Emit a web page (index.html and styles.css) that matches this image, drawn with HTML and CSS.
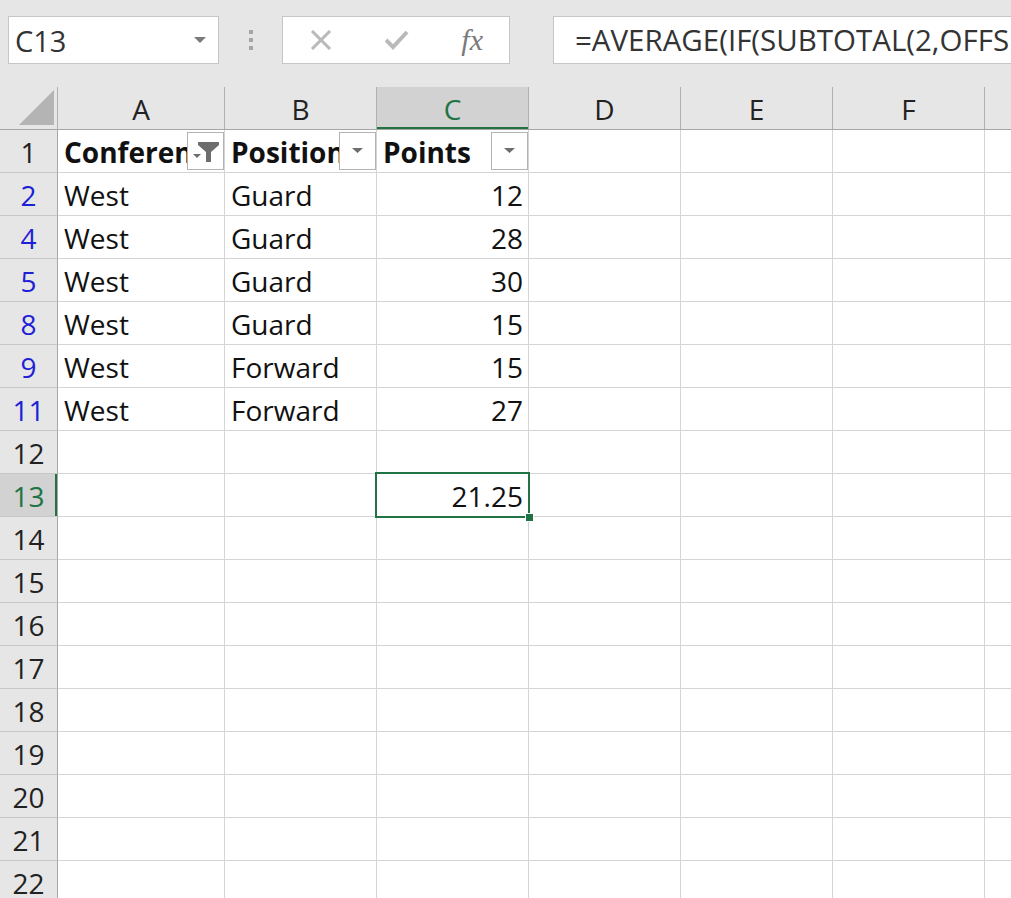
FILE: index.html
```html
<!DOCTYPE html>
<html lang="en">
<head>
  <meta charset="UTF-8" />
  <title>Book1 - Excel</title>
  <link rel="stylesheet" href="styles.css">
</head>
<body>
  <div class="toolbar">
    <div class="namebox">
      <span>C13</span>
      <svg class="caret" width="12" height="7" viewBox="0 0 12 7"><polygon points="0,0 12,0 6,6" fill="#7a7a7a"/></svg>
    </div>
    <div class="grip"><i></i><i></i><i></i></div>
    <div class="fxbox">
      <svg width="22" height="20" viewBox="0 0 22 20"><path d="M2 1 L20 19 M20 1 L2 19" stroke="#b9b9b9" stroke-width="3" fill="none"/></svg>
      <svg width="24" height="20" viewBox="0 0 24 20"><path d="M1 10 L8 17 L22 2" stroke="#b9b9b9" stroke-width="4" fill="none"/></svg>
      <span class="fx">fx</span>
    </div>
    <div class="formula">=AVERAGE(IF(SUBTOTAL(2,OFFSET(C2:C11,ROW(C2:C11)-ROW(C2),0)),C2:C11))</div>
  </div>

  <div class="sheet">
    <div class="row head">
      <div class="corner"><svg width="35" height="35" viewBox="0 0 35 35"><polygon points="35,0 35,35 0,35" fill="#b4b4b4"/></svg></div>
      <div class="colhead">A</div>
      <div class="colhead">B</div>
      <div class="colhead sel">C</div>
      <div class="colhead">D</div>
      <div class="colhead">E</div>
      <div class="colhead">F</div>
      <div class="colhead">G</div>
    </div>

    <div class="row">
      <div class="rowhead">1</div>
      <div class="cell title">Conference
        <span class="filter"><svg width="36" height="36" viewBox="0 0 36 36"><polygon points="5,21 13,21 9,25" fill="#6d6d6d"/><polygon points="10,9 31,9 31,12 23,19 23,29 18,29 18,19 10,12" fill="#6d6d6d"/></svg></span>
      </div>
      <div class="cell title">Position
        <span class="filter"><svg width="36" height="36" viewBox="0 0 36 36"><polygon points="12,15 23,15 17.5,20" fill="#6d6d6d"/></svg></span>
      </div>
      <div class="cell title">Points
        <span class="filter"><svg width="36" height="36" viewBox="0 0 36 36"><polygon points="12,15 23,15 17.5,20" fill="#6d6d6d"/></svg></span>
      </div>
      <div class="cell"></div><div class="cell"></div><div class="cell"></div><div class="cell"></div>
    </div>

    <div class="row">
      <div class="rowhead shown">2</div>
      <div class="cell">West</div><div class="cell">Guard</div><div class="cell num">12</div>
      <div class="cell"></div><div class="cell"></div><div class="cell"></div><div class="cell"></div>
    </div>
    <div class="row">
      <div class="rowhead shown">4</div>
      <div class="cell">West</div><div class="cell">Guard</div><div class="cell num">28</div>
      <div class="cell"></div><div class="cell"></div><div class="cell"></div><div class="cell"></div>
    </div>
    <div class="row">
      <div class="rowhead shown">5</div>
      <div class="cell">West</div><div class="cell">Guard</div><div class="cell num">30</div>
      <div class="cell"></div><div class="cell"></div><div class="cell"></div><div class="cell"></div>
    </div>
    <div class="row">
      <div class="rowhead shown">8</div>
      <div class="cell">West</div><div class="cell">Guard</div><div class="cell num">15</div>
      <div class="cell"></div><div class="cell"></div><div class="cell"></div><div class="cell"></div>
    </div>
    <div class="row">
      <div class="rowhead shown">9</div>
      <div class="cell">West</div><div class="cell">Forward</div><div class="cell num">15</div>
      <div class="cell"></div><div class="cell"></div><div class="cell"></div><div class="cell"></div>
    </div>
    <div class="row">
      <div class="rowhead shown">11</div>
      <div class="cell">West</div><div class="cell">Forward</div><div class="cell num">27</div>
      <div class="cell"></div><div class="cell"></div><div class="cell"></div><div class="cell"></div>
    </div>
    <div class="row">
      <div class="rowhead">12</div>
      <div class="cell"></div><div class="cell"></div><div class="cell"></div>
      <div class="cell"></div><div class="cell"></div><div class="cell"></div><div class="cell"></div>
    </div>
    <div class="row">
      <div class="rowhead sel">13</div>
      <div class="cell"></div><div class="cell"></div><div class="cell num active">21.25</div>
      <div class="cell"></div><div class="cell"></div><div class="cell"></div><div class="cell"></div>
    </div>
    <div class="row">
      <div class="rowhead">14</div>
      <div class="cell"></div><div class="cell"></div><div class="cell"></div>
      <div class="cell"></div><div class="cell"></div><div class="cell"></div><div class="cell"></div>
    </div>
    <div class="row">
      <div class="rowhead">15</div>
      <div class="cell"></div><div class="cell"></div><div class="cell"></div>
      <div class="cell"></div><div class="cell"></div><div class="cell"></div><div class="cell"></div>
    </div>
    <div class="row">
      <div class="rowhead">16</div>
      <div class="cell"></div><div class="cell"></div><div class="cell"></div>
      <div class="cell"></div><div class="cell"></div><div class="cell"></div><div class="cell"></div>
    </div>
    <div class="row">
      <div class="rowhead">17</div>
      <div class="cell"></div><div class="cell"></div><div class="cell"></div>
      <div class="cell"></div><div class="cell"></div><div class="cell"></div><div class="cell"></div>
    </div>
    <div class="row">
      <div class="rowhead">18</div>
      <div class="cell"></div><div class="cell"></div><div class="cell"></div>
      <div class="cell"></div><div class="cell"></div><div class="cell"></div><div class="cell"></div>
    </div>
    <div class="row">
      <div class="rowhead">19</div>
      <div class="cell"></div><div class="cell"></div><div class="cell"></div>
      <div class="cell"></div><div class="cell"></div><div class="cell"></div><div class="cell"></div>
    </div>
    <div class="row">
      <div class="rowhead">20</div>
      <div class="cell"></div><div class="cell"></div><div class="cell"></div>
      <div class="cell"></div><div class="cell"></div><div class="cell"></div><div class="cell"></div>
    </div>
    <div class="row">
      <div class="rowhead">21</div>
      <div class="cell"></div><div class="cell"></div><div class="cell"></div>
      <div class="cell"></div><div class="cell"></div><div class="cell"></div><div class="cell"></div>
    </div>
    <div class="row">
      <div class="rowhead">22</div>
      <div class="cell"></div><div class="cell"></div><div class="cell"></div>
      <div class="cell"></div><div class="cell"></div><div class="cell"></div><div class="cell"></div>
    </div>
  </div>
</body>
</html>
```

FILE: styles.css
```css
body {
  margin: 0;
  width: 1011px;
  height: 898px;
  overflow: hidden;
  background: #fff;
  font-family: "Open Sans", sans-serif;
  font-size: 28px;
  color: #111;
}

/* name box + formula bar */
.toolbar {
  box-sizing: border-box;
  height: 87px;
  padding: 16px 0 0 8px;
  background: #e6e6e6;
  display: flex;
  align-items: flex-start;
  overflow: hidden;
}
.namebox {
  box-sizing: border-box;
  width: 211px;
  height: 48px;
  flex: none;
  background: #fff;
  border: 1px solid #c6c6c6;
  display: flex;
  align-items: center;
  justify-content: space-between;
  padding: 0 12px 0 6px;
  font-size: 29px;
  color: #333;
}
.grip {
  margin-left: 30px;
  padding-top: 14px;
  flex: none;
  display: flex;
  flex-direction: column;
  gap: 4px;
}
.grip i {
  display: block;
  width: 4px;
  height: 4px;
  background: #a6a6a6;
}
.fxbox {
  box-sizing: border-box;
  margin-left: 29px;
  width: 228px;
  height: 48px;
  flex: none;
  background: #fff;
  border: 1px solid #c6c6c6;
  display: flex;
  align-items: center;
  padding: 0 26px 0 27px;
  justify-content: space-between;
}
.fx {
  font-family: "Liberation Serif", serif;
  font-style: italic;
  font-size: 30px;
  color: #7a7a7a;
}
.formula {
  box-sizing: border-box;
  margin-left: 43px;
  width: 700px;
  height: 48px;
  flex: none;
  background: #fff;
  border: 1px solid #c6c6c6;
  padding-left: 21px;
  line-height: 46px;
  font-size: 29.5px;
  color: #333;
  white-space: nowrap;
  overflow: hidden;
}

/* grid */
.row {
  display: grid;
  grid-template-columns: 58px 167px repeat(6, 152px);
  grid-template-rows: 43px;
  height: 43px;
}
.row > div {
  box-sizing: border-box;
  border-right: 1px solid #d4d4d4;
  border-bottom: 1px solid #d4d4d4;
  padding-top: 2px;
  line-height: 40px;
  white-space: nowrap;
}
.head > div {
  background: #e6e6e6;
  border-right-color: #b0b0b0;
  border-bottom-color: #a6a6a6;
}
.row > .corner {
  display: flex;
  justify-content: flex-end;
  align-items: flex-end;
  padding: 0 3px 4px 0;
}
.corner svg {
  display: block;
}
.colhead {
  text-align: center;
  color: #222;
}
.colhead.sel {
  background: #d2d2d2 !important;
  color: #217346;
  box-shadow: inset 0 -2px 0 #217346;
}
.row > .rowhead {
  background: #e6e6e6;
  border-right-color: #a6a6a6;
  border-bottom-color: #c8c8c8;
  text-align: center;
  color: #222;
}
.rowhead.shown {
  color: #1f1fd6;
}
.row > .rowhead.sel {
  background: #d2d2d2;
  color: #217346;
  box-shadow: inset -2px 0 0 #217346;
}

.cell {
  padding-left: 6px;
  padding-right: 6px;
  overflow: hidden;
}
.cell.num {
  text-align: right;
  padding-right: 5px;
}
.cell.title {
  position: relative;
  font-weight: bold;
}
.filter {
  position: absolute;
  top: 2px;
  right: 0;
  box-sizing: border-box;
  width: 37px;
  height: 38px;
  background: #fff;
  border: 1px solid #b3b3b3;
}
.filter svg {
  display: block;
}

/* active cell */
.row > .cell.active {
  position: relative;
  overflow: visible;
}
.cell.active::before {
  content: "";
  position: absolute;
  left: -2px;
  top: -2px;
  right: -2px;
  bottom: -2px;
  border: 2px solid #217346;
}
.cell.active::after {
  content: "";
  position: absolute;
  right: -6px;
  bottom: -6px;
  width: 7px;
  height: 7px;
  background: #217346;
  border: 1px solid #fff;
}
```
